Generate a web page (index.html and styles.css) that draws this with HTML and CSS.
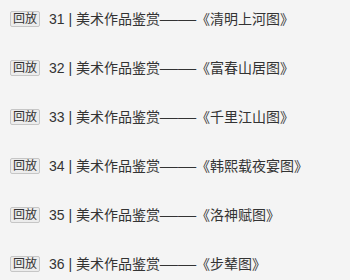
FILE: index.html
```html
<!DOCTYPE html>
<html lang="zh">
<head>
<meta charset="utf-8">
<link rel="stylesheet" href="styles.css">
</head>
<body>
<ul class="list">
  <li class="row"><span class="badge">回放</span><span class="title">31 | 美术作品鉴赏<span class="dash">——</span>《清明上河图》</span></li>
  <li class="row"><span class="badge">回放</span><span class="title">32 | 美术作品鉴赏<span class="dash">——</span>《富春山居图》</span></li>
  <li class="row"><span class="badge">回放</span><span class="title">33 | 美术作品鉴赏<span class="dash">——</span>《千里江山图》</span></li>
  <li class="row"><span class="badge">回放</span><span class="title">34 | 美术作品鉴赏<span class="dash">——</span>《韩熙载夜宴图》</span></li>
  <li class="row"><span class="badge">回放</span><span class="title">35 | 美术作品鉴赏<span class="dash">——</span>《洛神赋图》</span></li>
  <li class="row"><span class="badge">回放</span><span class="title">36 | 美术作品鉴赏<span class="dash">——</span>《步辇图》</span></li>
</ul>
</body>
</html>
```

FILE: styles.css
```css
html, body {
  margin: 0;
  padding: 0;
  background: #f4f4f4;
}
body {
  font-family: "Liberation Sans", "Noto Sans CJK SC", sans-serif;
  color: #333;
}
.list {
  list-style: none;
  margin: 0;
  padding: 11px 0 0 10px;
}
.row {
  display: flex;
  align-items: center;
  gap: 9px;
  height: 16px;
  margin-bottom: 33px;
}
.row:last-child {
  margin-bottom: 0;
}
.badge {
  box-sizing: border-box;
  height: 16px;
  padding: 0 2px;
  border: 1px solid #c6c6c6;
  border-radius: 2px;
  background: #ececec;
  font-size: 12px;
  line-height: 14px;
  color: #333;
}
.title {
  font-size: 14px;
  line-height: 16px;
  color: #333;
  white-space: nowrap;
}
.dash {
  display: inline-block;
  transform: scaleX(1.3);
  margin: 0 4px;
}
```
